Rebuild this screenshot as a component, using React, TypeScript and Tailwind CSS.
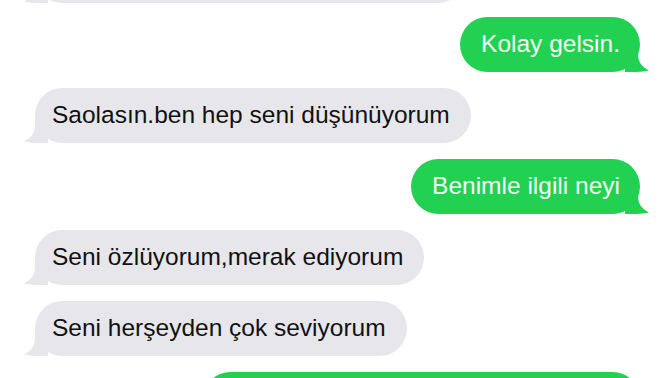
import React from "react";

function Tail({ side, color }: { side: "left" | "right"; color: string }) {
  const left = side === "left";
  return (
    <svg
      width="24"
      height="24"
      viewBox="0 0 24 24"
      className={left ? "absolute bottom-0 left-[-11px]" : "absolute bottom-0 right-[-9px]"}
      style={{ transform: left ? undefined : "scaleX(-1)" }}
    >
      <path
        d="M11 0 L24 0 L24 24 L18 24 C12 24 5 24 0 22.5 C7 19 11 14 11 6 Z"
        fill={color}
      />
    </svg>
  );
}

function Bubble({ text, me }: { text: string; me?: boolean }) {
  const color = me ? "#22d152" : "#e6e6eb";
  return (
    <div className={`flex ${me ? "justify-end" : "justify-start"}`}>
      <div
        className={`relative h-[55px] flex items-center rounded-[28px] text-[24.5px] leading-none whitespace-nowrap ${
          me ? "bg-[#22d152] text-[#f4fff6] pl-[21px] pr-[20px]" : "bg-[#e6e6eb] text-[#111] pl-[17px] pr-[21px]"
        }`}
      >
        <Tail side={me ? "right" : "left"} color={color} />
        <span className="relative">{text}</span>
      </div>
    </div>
  );
}

export default function App() {
  return (
    <div
      className="w-[672px] h-[378px] overflow-hidden bg-white"
      style={{ fontFamily: '"Liberation Sans", Arial, sans-serif' }}
    >
      <div className="flex flex-col gap-4 pl-[35px] pr-[32px] pt-[1px]">
        <div className="mt-[-53px] mb-[-2px] flex">
          <div className="relative h-[55px] w-[430px] rounded-[28px] bg-[#e6e6eb]">
            <Tail side="left" color="#e6e6eb" />
          </div>
        </div>
        <Bubble me text="Kolay gelsin." />
        <Bubble text="Saolasın.ben hep seni düşünüyorum" />
        <Bubble me text="Benimle ilgili neyi" />
        <Bubble text="Seni özlüyorum,merak ediyorum" />
        <Bubble text="Seni herşeyden çok seviyorum" />
        <div className="flex justify-end">
          <div className="h-[55px] w-[437px] rounded-[28px] bg-[#22d152]" />
        </div>
      </div>
    </div>
  );
}
